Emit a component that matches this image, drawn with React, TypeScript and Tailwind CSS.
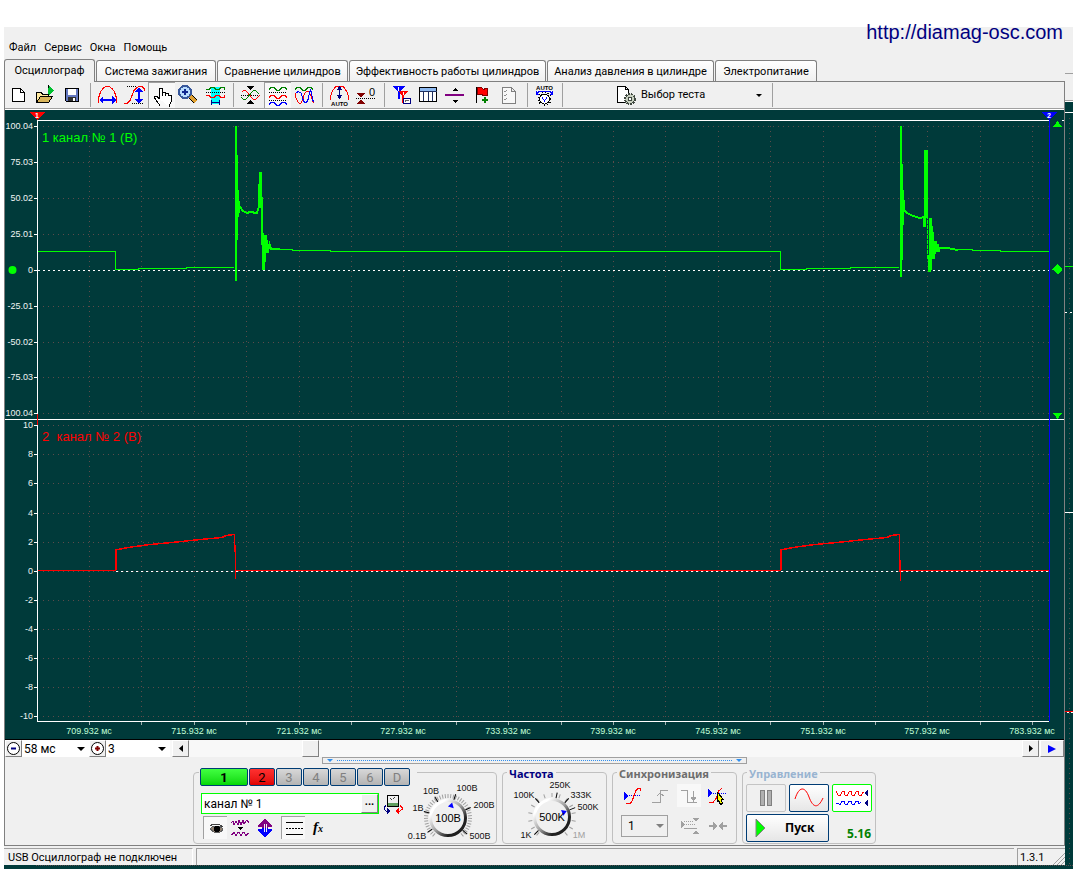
import { useState } from 'react';
import type { ReactNode } from 'react';

const tabs = [
  { label: 'Осциллограф', width: 'w-[91px]' },
  { label: 'Система зажигания', width: 'w-[120px]' },
  { label: 'Сравнение цилиндров', width: 'w-[131px]' },
  { label: 'Эффективность работы цилиндров', width: 'w-[197px]' },
  { label: 'Анализ давления в цилиндре', width: 'w-[167px]' },
  { label: 'Электропитание', width: 'w-[102px]' },
];

const raised =
  'bg-[#f0f0f0] border border-t-white border-l-white border-b-[#808080] border-r-[#808080] flex items-center justify-center';

/* ---------- Toolbar ---------- */

function ToolButton({ label, pressed, children }: { label: string; pressed?: boolean; children: ReactNode }) {
  return (
    <button
      aria-label={label}
      className={`w-[27px] h-[26px] ${pressed ? 'bg-[#f8f8f8] border-t border-l border-[#a0a0a0]' : ''}`}
    >
      <svg
        viewBox={pressed ? '1 1 26 25' : '0 0 27 26'}
        className="w-full h-full font-['Liberation_Sans',Arial,sans-serif]"
        fill="none"
        stroke="#000"
        shapeRendering="crispEdges"
      >
        {children}
      </svg>
    </button>
  );
}

function Separator() {
  return (
    <div className="w-2 h-6 flex justify-center">
      <div className="w-px bg-[#a0a0a0]" />
    </div>
  );
}

function Toolbar() {
  return (
    <div className="flex items-center h-[26px]">
      <ToolButton label="Новый">
        <path d="M7.5 6.5h8l4 4v9h-12z" fill="#fff" />
        <path d="M15.5 6.5v4h4" />
      </ToolButton>
      <ToolButton label="Открыть">
        <path d="M4.5 20.5v-10h5l1 2h6v3" fill="#ffe9a0" />
        <path d="M4.5 20.5l4-6h12l-4 6z" fill="#d8b45a" />
        <path d="M16 3v11l6-5z" fill="#00c030" stroke="none" />
        <path d="M16.5 3v3M16.5 12v2" />
      </ToolButton>
      <ToolButton label="Сохранить">
        <path d="M6.5 6.5h13v13h-12l-1-1z" fill="#6478c0" />
        <path d="M9 7h8v6H9z" fill="#fff" stroke="none" />
        <path d="M9 15h8v4H9z" fill="#303030" stroke="none" />
        <path d="M14 16h2v3h-2z" fill="#fff" stroke="none" />
      </ToolButton>
      <Separator />
      <ToolButton label="Масштаб по горизонтали">
        <path d="M4.5 21v-5l1-3 1-3 2-3 3-2.500h4l3 2.500 2 3 1 3 1 3v5" stroke="#f00" />
        <path d="M6 18h16" stroke="#00f" strokeWidth="2" />
        <path d="M5 18l4-4v8zM22 18l-4-4v8z" fill="#00f" stroke="none" />
      </ToolButton>
      <ToolButton label="Масштаб по вертикали">
        <path d="M6 4.5h10M11 21.5h12" strokeDasharray="1 1" />
        <path d="M3 21.5h3l3-3 2-5 2-5 3-3 2-1h3l2 2v2" stroke="#f00" />
        <path d="M18 7v13" stroke="#00f" strokeWidth="2" />
        <path d="M18 5l-4 5h8zM18 22l-4-5h8z" fill="#00f" stroke="none" />
      </ToolButton>
      <ToolButton label="Рука" pressed>
        <path
          d="M11.5 17V7l1-1h1l1 1v7v-4h2l1 1v3v-3h2l1 1v2v-1h2l1 1v5l-2 4v2M11.500 17l-3-3h-2v2l3 4 2 3v1"
          fill="#fff"
        />
      </ToolButton>
      <ToolButton label="Увеличить">
        <path d="M15 14l6 6" stroke="#000" strokeWidth="5" />
        <path d="M15 14l6 6" stroke="#e0a030" strokeWidth="3" />
        <circle cx="10" cy="10" r="6" fill="#b8dcff" stroke="#38589c" strokeWidth="2" />
        <path d="M7 10h6M10 7v6" stroke="#102890" strokeWidth="2" />
      </ToolButton>
      <ToolButton label="Измерения">
        <path d="M9 5h9v17H9z" fill="#0ff" stroke="none" />
        <path d="M4 7.5h3l2-2h3l2 2h3l2-2h3l1 2" stroke="#008000" />
        <path d="M4 10.5h20" strokeDasharray="1 1" />
        <path d="M4 13.500h3l2 2h3l2-2h3l2 2h3l1-2" stroke="#f00" />
        <path d="M9.5 18v5M17.5 18v5M10 20.5h7" stroke="#000080" />
      </ToolButton>
      <Separator />
      <ToolButton label="Сжать">
        <path d="M10 4h7l-3.5 4zM10 22h7l-3.5-4z" fill="#000" stroke="none" />
        <path d="M4 13.5h19" strokeDasharray="1 1" />
        <path d="M4.5 10.500l2-2h2l2 2 4 5 2 2h2l2-2 2-2" stroke="#f00" />
        <path d="M4.5 15.500l2 2h2l2-2 4-5 2-2h2l2 2 2 2" stroke="#008000" />
      </ToolButton>
      <ToolButton label="Разделить каналы" pressed>
        <path d="M5 7.500l2-2h3l3 3h2l3-3h3l2 2" stroke="#008000" />
        <path d="M5 10.5h18M5 18.5h18" strokeDasharray="1 1" />
        <path d="M5 15.500l2-2h3l3 3h2l3-3h3l2 2" stroke="#f00" />
        <path d="M5 22.500l2-2h3l3 3h2l3-3h3l2 2" stroke="#00f" />
      </ToolButton>
      <ToolButton label="Совместить каналы">
        <path d="M4 7.500l2-2h3l3 3h2l3-3h3l2 2" stroke="#008000" />
        <path d="M4.5 10.5v4l2 5 2 2h1l2-3 2-7 2-2h2l2 3 2 6 1 3" stroke="#f00" />
        <path d="M5.500 10.500l2-1 3 2 1 5 2 4h2l2-4 1-6 1-2 1 2 1 6 1 4" stroke="#00f" />
      </ToolButton>
      <Separator />
      <ToolButton label="Автомасштаб">
        <path d="M4.5 18v-4l2-5 3-4 2-1h4l2 1 3 4 2 5v4" stroke="#f00" />
        <path d="M13.5 6v10" stroke="#000080" />
        <path d="M13.5 4l-3 4h6zM13.500 17l-3-4h6z" fill="#000080" stroke="none" />
        <text x="13.5" y="24" fontSize="6" fontWeight="bold" textAnchor="middle" fill="#000" stroke="none">AUTO</text>
      </ToolButton>
      <ToolButton label="Сдвиг нуля">
        <path d="M4 11h8l-4 5zM4 22h8l-4-5z" fill="#800000" stroke="none" />
        <path d="M3 16.5h19" strokeDasharray="1 1" />
        <text x="16" y="14" fontSize="11" fill="#000" stroke="none">0</text>
      </ToolButton>
      <Separator />
      <ToolButton label="Маркеры">
        <path d="M4 4h13l-5 6v7h-2v-7z" fill="#00f" stroke="none" />
        <path d="M11 9h9l-4 5v7h-2v-7z" fill="#f00" stroke="none" />
        <path d="M10.5 5v4M15.5 10v3" stroke="#fff" />
        <path d="M15.5 16.5h7v5h-7z" fill="#fff" stroke="#000080" />
        <path d="M17 20l1-2 1 1 2-1" stroke="#666" />
      </ToolButton>
      <ToolButton label="Таблица">
        <path d="M4.5 5.5h17v14h-17z" fill="#fff" />
        <path d="M5 6h16v3H5z" fill="#8cb8f0" stroke="none" />
        <path d="M4.5 9.5h17M8.500 9v10M13.500 9v10M17.500 9v10" stroke="#203060" />
      </ToolButton>
      <ToolButton label="Разделитель">
        <path d="M3 13h19" stroke="#800080" strokeWidth="2" />
        <path d="M10 9h6l-3-3zM10 18h6l-3 3z" fill="#000" stroke="none" />
      </ToolButton>
      <ToolButton label="Добавить флаг">
        <path d="M7.5 5v16" />
        <path d="M8.5 5.5h4l2 2 2-1h2v7h-4l-2-1h-4z" fill="#f00" stroke="#800000" />
        <path d="M13 18h6M16 15v6" stroke="#008000" strokeWidth="2" />
      </ToolButton>
      <ToolButton label="Отчёт">
        <path d="M6.5 5.5h9l4 4v12h-13zM15.500 5.500v4h4" fill="#f8f8f8" stroke="#808080" />
        <path d="M8 9l1 1 2-2M8 13l1 1 2-2M8 17l1 1 2-2" stroke="#909090" />
      </ToolButton>
      <Separator />
      <ToolButton label="Автоматическая частота">
        <text x="13.5" y="8" fontSize="6" fontWeight="bold" textAnchor="middle" fill="#000" stroke="none">AUTO</text>
        <path d="M6 11.500l2-2h11l2 2M5.500 9v3h3M21.500 9v3h-3" stroke="#00f" />
        <circle cx="13.5" cy="17" r="6.5" strokeDasharray="1 2" />
        <circle cx="13.5" cy="17" r="5" fill="#fff" />
        <path d="M11.500 15v1l2 3 2-3v-1" stroke="#00f" />
      </ToolButton>
      <Separator />
      <button className="flex items-center h-[26px] w-[202px] pl-[49px] pr-1.5 text-[11px]">
        <svg viewBox="0 0 22 22" className="w-[22px] h-[22px] mr-1" fill="none" stroke="#000" shapeRendering="crispEdges">
          <path d="M2.5 2.5h8l3 3v13h-11zM10.500 2.500v3h3" fill="#fff" />
          <circle cx="15" cy="15" r="5" fill="#c8d0c0" stroke="#404840" strokeWidth="2" strokeDasharray="2 1" />
          <circle cx="15" cy="15" r="2" fill="#fff" stroke="#404840" />
        </svg>
        <span className="flex-1 text-left">Выбор теста</span>
        <svg viewBox="0 0 6 3" className="w-1.5 h-[3px]"><path d="M0 0h6L3 3z" /></svg>
      </button>
      <Separator />
    </div>
  );
}

/* ---------- Oscillogram ---------- */

const upperRows = [
  [126, '100.04'], [162, '75.03'], [198, '50.02'], [234, '25.01'], [270, '0'],
  [306, '-25.01'], [342, '-50.02'], [377, '-75.03'], [413, '100.04'],
] as const;

const lowerRows = [
  [425, '10'], [454, '8'], [483, '6'], [513, '4'], [542, '2'], [571, '0'],
  [600, '-2'], [629, '-4'], [658, '-6'], [687, '-8'], [716, '-10'],
] as const;

const rows = [...upperRows, ...lowerRows];

const times = ['709.932', '715.932', '721.932', '727.932', '733.932', '739.932', '745.932', '751.932', '757.932', '783.932'];
const columns = Array.from({ length: 19 }, (_, i) => Math.round(89 + i * 52.4));

const voltageFlat =
  'M38 251.5H115.5V269.5H138V268.5H186V267.5H234M280 249.5H292V250.5H330V251.5H780.5V269.5H806V268.5H850V267.5H899M958 249.5H972V250.5H1000V251.5H1049';

const voltageBursts = [
  'M236 281V198M235.5 200V126M236.5 155V240M237.500 190V217M238.500 201V213L240 207L243 211L247 213L250 212L257 213L259 206V190L260.500 172V208L261.500 197V245L262.500 233V263L263.500 270L264.500 262V243L265.500 235V240L266.500 252V240L267.500 253L269.500 244L271 249L280 249.500',
  'M901 277V198M900.5 200V126M901.5 164V260M902.500 190V225L903.500 200V210L907 213L913 216L920 218L923.500 217L924.500 227V190L925.500 150V205L926.500 150V218',
  'M928.500 255V270L929.500 272V238L930.500 218V270L931.500 226V235L932.500 232V255L933.500 259V252L934.500 254L935.500 241L936.500 252L937.500 244L938.500 252L940 248H947L958 250',
];

const currentFlat = 'M38 570.5H115.5V560M234.5 534V552M235.5 545V579M236 570.5H780.5V560M899.5 534V572M900.5 560V581M901 570.5H1049';
const currentRamp =
  'M116 570V550L128 547.500L150 544.500L172 542.500L200 539.500L222 537.500L226 535.500L234.500 534.500M781 570V550L793 547.500L815 544.500L837 542.500L865 539.500L887 537.500L891 535.500L899.500 534.500';

function Oscillogram() {
  return (
    <svg
      viewBox="5 110 1059 629"
      className="block w-full bg-[#003a3a] border-b border-black font-['Liberation_Sans',Arial,sans-serif]"
      fill="none"
      shapeRendering="crispEdges"
    >
      {/* dotted grid */}
      <g stroke="#5c4b4a" strokeDasharray="1 4">
        {rows.map(([y]) => (
          <path key={y} d={`M43 ${y}.5H1049`} />
        ))}
        {columns.map((x) => (
          <path key={x} d={`M${x}.5 126V416M${x}.5 426V721`} />
        ))}
      </g>
      <path d="M38 270.5H1049M116 571.5H1049" stroke="#fff" strokeDasharray="2 3" />

      {/* axes */}
      <path d="M38 120.5H1049M1062 120.5h2M5 419.5H1064M37.5 120V721M37 721.5H1049" stroke="#fff" />
      <path d="M37.5 414V425" stroke="#f00" />
      <g stroke="#fff">
        {rows.map(([y]) => (
          <path key={y} d={`M34 ${y}.5h3`} />
        ))}
      </g>
      <g stroke="#a0b0b0">
        {columns.map((x) => (
          <path key={x} d={`M${x}.5 722v3`} />
        ))}
      </g>
      <g fill="#f0f4f4" fontSize="9" textAnchor="end">
        {rows.map(([y, label]) => (
          <text key={y} x="33" y={y + 3}>{label}</text>
        ))}
      </g>
      <g fill="#c0ffd8" fontSize="9" textAnchor="middle">
        {times.map((t, i) => (
          <text key={t} x={Math.round(89 + i * 104.8)} y="734">{t} мс</text>
        ))}
      </g>

      {/* signals */}
      <path d={voltageFlat} stroke="#0f0" />
      {voltageBursts.map((d) => (
        <path key={d} d={d} stroke="#0f0" strokeWidth="2" />
      ))}
      <path d="M927.5 215V260" stroke="#0f0" strokeDasharray="4 1" />
      <path d={currentFlat} stroke="#f00" />
      <path d={currentRamp} stroke="#f00" strokeWidth="1.5" />
      <text x="42" y="142" fontSize="13" fill="#0f0">1 канал № 1 (В)</text>
      <text x="42" y="441" fontSize="13" fill="#f00" xmlSpace="preserve">2  канал № 2 (В)</text>

      {/* cursors */}
      <path d="M1049.5 118V721" stroke="#00f" />
      <path d="M30 112h15l-7.5 8z" fill="#f00" />
      <path d="M1042 112h15l-7.5 8z" fill="#00f" />
      <g fill="#fff" fontSize="7" fontWeight="bold" textAnchor="middle">
        <text x="37" y="118">1</text>
        <text x="1049" y="118">2</text>
      </g>
      <path d="M1053 127h9l-4.5-6zM1053 413h9l-4.5 6zM1057.5 264l5 5.5-5 5-5-5z" fill="#0f0" />
      <circle cx="12.5" cy="270" r="4" fill="#0f0" shapeRendering="auto" />
    </svg>
  );
}

/* ---------- Scroll row ---------- */

function DropArrow({ color = '#000' }: { color?: string }) {
  return (
    <svg viewBox="0 0 8 4" className="absolute right-1 top-1/2 -mt-0.5 w-2 h-1 pointer-events-none">
      <path d="M0 0h8L4 4z" fill={color} />
    </svg>
  );
}

function ScrollRow() {
  return (
    <div className="flex h-[17px] bg-[#f8f8f8] text-xs">
      <button aria-label="Уменьшить" className={`w-[17px] ${raised}`}>
        <svg viewBox="0 0 13 13" className="w-[13px] h-[13px] shrink-0" fill="#fff" stroke="#000">
          <circle cx="6.5" cy="6.5" r="6" />
          <path d="M4 6.5h5" stroke="#000080" strokeWidth="2" />
        </svg>
      </button>
      <div className="relative w-[67px]">
        <select aria-label="Развёртка" className="appearance-none block w-full h-full bg-white pl-0.5">
          <option>58 мс</option>
        </select>
        <DropArrow />
      </div>
      <button aria-label="Увеличить" className={`w-[17px] ${raised}`}>
        <svg viewBox="0 0 13 13" className="w-[13px] h-[13px] shrink-0" fill="#fff" stroke="#000">
          <circle cx="6.5" cy="6.5" r="6" />
          <path d="M4 6.5h5M6.5 4v5" stroke="#800000" strokeWidth="2" />
        </svg>
      </button>
      <div className="relative w-16">
        <select aria-label="Множитель" className="appearance-none block w-full h-full bg-white pl-0.5">
          <option>3</option>
        </select>
        <DropArrow />
      </div>
      <button aria-label="Назад" className={`ml-0.5 w-[17px] ${raised}`}>
        <svg viewBox="0 0 4 7" className="w-1 h-[7px]"><path d="M4 0v7L0 3.5z" /></svg>
      </button>
      <div className="flex-1 flex">
        <div className="w-[13.6%]" />
        <button aria-label="Позиция" className={`w-[17px] ${raised}`} />
      </div>
      <button aria-label="Вперёд" className={`w-[17px] ${raised}`}>
        <svg viewBox="0 0 4 7" className="w-1 h-[7px]"><path d="M0 0v7l4-3.5z" /></svg>
      </button>
      <button aria-label="В конец" className={`ml-px w-6 ${raised}`}>
        <svg viewBox="0 0 8 8" className="w-2 h-2"><path d="M0 0v8l8-4z" fill="#00f" /></svg>
      </button>
    </div>
  );
}

/* ---------- Knobs ---------- */

type KnobLabel = { text: string; x: number; y: number; dim?: boolean };

type KnobProps = {
  id: string;
  value: string;
  labels: KnobLabel[];
  marks: number[];
  angle: number;
  step: number;
};

function Knob({ id, value, labels, marks, angle, step }: KnobProps) {
  const ticks: number[] = [];
  for (let a = -140; a <= 140; a += step) ticks.push(a);
  return (
    <svg viewBox="0 0 94 68" className="w-[94px] h-[68px] font-['Liberation_Sans',Arial,sans-serif]">
      <defs>
        <linearGradient id={id} x1="0" y1="0" x2="1" y2="1">
          <stop offset="0.2" stopColor="#fff" />
          <stop offset="0.5" stopColor="#a0a0a0" />
          <stop offset="0.75" stopColor="#202020" />
        </linearGradient>
      </defs>
      {ticks.map((a) => (
        <path key={a} d="M45 23v-4" stroke="#a0a0a0" transform={`rotate(${a} 45 43)`} />
      ))}
      {marks.map((a) => (
        <path key={a} d="M45 24v-6" stroke="#000" transform={`rotate(${a} 45 43)`} />
      ))}
      <circle cx="45" cy="43" r="17.5" fill="#f0f0f0" stroke={`url(#${id})`} strokeWidth="3" />
      <path d="M42 32h6l-3-5z" fill="#00f" transform={`rotate(${angle} 45 43)`} />
      <text x="45" y="47" fontSize="11" textAnchor="middle">{value}</text>
      {labels.map((l) => (
        <text key={l.text} x={l.x} y={l.y} fontSize="9" textAnchor="middle" fill={l.dim ? '#a0a0a0' : '#101010'}>
          {l.text}
        </text>
      ))}
    </svg>
  );
}

const voltLabels: KnobLabel[] = [
  { text: '0.1В', x: 14, y: 64 },
  { text: '1В', x: 15, y: 36 },
  { text: '10В', x: 28, y: 19 },
  { text: '100В', x: 64, y: 16 },
  { text: '200В', x: 81, y: 33 },
  { text: '500В', x: 77, y: 64 },
];

const rateLabels: KnobLabel[] = [
  { text: '1K', x: 19, y: 64 },
  { text: '100K', x: 17, y: 24 },
  { text: '250K', x: 53, y: 14 },
  { text: '333K', x: 74, y: 24 },
  { text: '500K', x: 81, y: 36 },
  { text: '1M', x: 72, y: 64, dim: true },
];

/* ---------- Control panels ---------- */

const channels = ['3', '4', '5', '6', 'D'];

function IconButton({ label, pressed, children }: { label: string; pressed?: boolean; children: ReactNode }) {
  return (
    <button
      aria-label={label}
      className={`w-6 h-[23px] flex items-center justify-center ${pressed ? 'bg-[#f8f8f8] border-t border-l border-[#a0a0a0]' : ''}`}
    >
      <svg viewBox="0 0 20 20" className="w-5 h-5" fill="none" stroke="#000" shapeRendering="crispEdges">
        {children}
      </svg>
    </button>
  );
}

function ChannelPanel() {
  const [name, setName] = useState('канал № 1');
  return (
    <div className="flex w-[304px] h-[72px] border border-[#c0c0c0] rounded">
      <div className="w-[209px] pl-[5px] -mt-[5px]">
        <div className="flex gap-px w-[218px] bg-[#f0f0f0] pl-px text-[13px] text-[#808080]">
          <button className="w-12 h-[18px] leading-none border border-[#003c74] rounded-xs bg-gradient-to-b from-[#40ff40] to-[#00d800] font-bold text-black">1</button>
          <button className="w-[26px] h-[18px] leading-none border border-[#003c74] rounded-xs bg-gradient-to-b from-[#ff3030] to-[#e00000] text-black">2</button>
          {channels.map((c) => (
            <button key={c} className="w-[26px] h-[18px] leading-none border border-[#003c74] rounded-xs bg-gradient-to-b from-[#d8d8d8] to-[#b4b4b4]">
              {c}
            </button>
          ))}
        </div>
        <div className="flex items-center mt-[7px] ml-0.5">
          <div className="flex w-[178px] h-[21px] border border-[#00ff00] bg-white">
            <input
              aria-label="Название канала"
              value={name}
              onChange={(e) => setName(e.target.value)}
              className="flex-1 min-w-0 px-0.5 text-xs outline-none"
            />
            <button className={`w-[17px] text-[11px] font-bold leading-none pb-1 ${raised}`}>...</button>
          </div>
          <svg viewBox="0 0 20 20" className="w-5 h-5 ml-1" fill="none" stroke="#000" shapeRendering="crispEdges">
            <path d="M4.5 1.5h11v11h-11z" fill="#f0f0f0" />
            <path d="M7 4l2 2 2-2 2-1" stroke="#404040" strokeDasharray="1 1" />
            <path d="M5 9h10v3H5z" fill="#60a060" stroke="none" />
            <path d="M3 11.5l-2 2v2l3 2h1" stroke="#000080" />
            <path d="M4 14l4 3-4 3z" fill="#000080" stroke="none" />
            <path d="M17 11.5l2 2v2l-3 2h-1" stroke="#f00" />
            <path d="M16 14l-4 3 4 3z" fill="#f00" stroke="none" />
          </svg>
        </div>
        <div className="flex gap-px mt-0.5 ml-1">
          <IconButton label="Показать канал" pressed>
            <path d="M4 11l3-3h6l3 2 1 2-3 2H8z" fill="#908070" stroke="#606060" />
            <path d="M4 8l3-2h6l4 3" stroke="#404040" />
            <circle cx="11" cy="11" r="2.5" fill="#000" />
          </IconButton>
          <IconButton label="Фильтр">
            <path d="M1 5l2-2 1 4 2-4 2 4 1-5 2 5 2-5 1 4 2-3 1-1 2 3" stroke="#800080" />
            <path d="M7 9h6l-3 3z" fill="#000" stroke="none" />
            <path d="M1 16.5h1l2-2 2 3 2-3h1l2 3 2-3h1l2 3 2-2h1" stroke="#800080" />
          </IconButton>
          <IconButton label="Сдвиг канала">
            <path d="M10 1l7 6v2h-4v1H7V9H3V7z" fill="#800080" stroke="none" />
            <path d="M10 19l7-6v-2h-4v-1H7v1H3v2z" fill="#00f" stroke="none" />
            <path d="M9 6v8M11 6v8" stroke="#f0f0f0" />
          </IconButton>
          <div className="w-0.5" />
          <IconButton label="Линии" pressed>
            <path d="M2 4.5h17M2 16.5h17" />
            <path d="M2 10.5h17" strokeDasharray="2 1" />
          </IconButton>
          <button aria-label="Функция" className="w-6 font-['Liberation_Serif',serif] italic font-bold text-[15px] leading-none">
            f<span className="text-[10px]">x</span>
          </button>
        </div>
      </div>
      <div className="mt-0.5">
        <Knob id="rim-volt" value="100В" labels={voltLabels} marks={[-125, -75, -32, 18, 65, 130]} angle={15} step={7} />
      </div>
    </div>
  );
}

const legend = 'ml-1 pt-1 px-0.5 text-[11px] font-bold leading-[12px] font-[\'Noto_Sans\',sans-serif]';

function SyncPanel() {
  return (
    <fieldset className="w-[125px] h-[80px] border border-[#c0c0c0] rounded">
      <legend className={`${legend} text-[#6d6d6d]`}>Синхронизация</legend>
      <div className="flex gap-1 pl-2 mt-1">
        <IconButton label="Уровень">
          <path d="M1 6v8l5-4z" fill="#00f" stroke="none" />
          <path d="M4 9.5h14" stroke="#00f" strokeDasharray="1 1" />
          <path d="M3 17.5h4l2-2 2-6 2-5 2-2h2v2" stroke="#f00" />
        </IconButton>
        <IconButton label="Фронт">
          <path d="M1 16.5h8v-12h8M9.5 14V8M6 10l3-3 4 3" stroke="#a0a0a0" />
        </IconButton>
        <div className="bg-[#f8f8f8]">
          <IconButton label="Спад">
            <path d="M2 4.5h6v12h10M14.5 5v9M12 11h5l-2.5 4z" stroke="#a0a0a0" />
          </IconButton>
        </div>
        <IconButton label="Курсор">
          <path d="M1 3v8l5-4z" fill="#00f" stroke="none" />
          <path d="M4 7.5h15" stroke="#00f" strokeDasharray="1 1" />
          <path d="M2 16.5h4l3-4 3-8 3-2" stroke="#f00" />
          <path d="M10.5 6.5l6 7h-2l1 4-2 1-2-4-1 1z" fill="#ff0" />
        </IconButton>
      </div>
      <div className="flex items-center gap-1 pl-2 mt-[7px]">
        <div className="relative w-[47px] h-[22px]">
          <select aria-label="Канал синхронизации" className="appearance-none block w-full h-full border border-[#a0a0a0] bg-[#f0f0f0] pl-1.5 text-xs">
            <option>1</option>
          </select>
          <DropArrow color="#808080" />
        </div>
        <div className="w-0.5" />
        <IconButton label="Зона">
          <path d="M1 5v7l4-3.5zM12 2h7l-3 4zM12 18h7l-3-4z" fill="#a0a0a0" stroke="none" />
          <path d="M4 5.5h10M4 8.5h12" strokeDasharray="1 1" stroke="#a0a0a0" />
          <path d="M4 12.5h13" stroke="#a0a0a0" />
        </IconButton>
        <IconButton label="К центру">
          <path d="M1 9h4V6l5 4-5 4v-3H1zM19 9h-4V6l-5 4 5 4v-3h4z" fill="#a0a0a0" stroke="none" />
        </IconButton>
      </div>
    </fieldset>
  );
}

function ControlPanel() {
  return (
    <fieldset className="w-[134px] h-[80px] border border-[#c0c0c0] rounded">
      <legend className={`${legend} text-[#99b4d1]`}>Управление</legend>
      <div className="flex gap-[3px] pl-[3px] mt-1">
        <button aria-label="Пауза" className="w-10 h-7 border border-[#c4c4c4] rounded-xs flex items-center justify-center gap-0.5">
          <span className="w-[5px] h-4 bg-[#b0b0b0] border border-[#808080]" />
          <span className="w-[5px] h-4 bg-[#b0b0b0] border border-[#808080]" />
        </button>
        <button aria-label="Однократно" className="w-10 h-7 border border-[#003c74] rounded-xs bg-gradient-to-b from-white to-[#e6e6e6] flex items-center justify-center">
          <svg viewBox="0 0 30 20" className="w-[30px] h-5" fill="none" stroke="#f00">
            <path d="M1 11C5-2 11-2 15 9s9 12 14 1" />
          </svg>
        </button>
        <button aria-label="Непрерывно" className="w-10 h-7 border border-[#00ff00] rounded-xs bg-white flex items-center justify-center">
          <svg viewBox="0 0 34 20" className="w-[34px] h-5" fill="none" shapeRendering="crispEdges">
            <path d="M1 3l2 4 2 1 2-4 2-1 1 4 2 1 2-4 2-1 1 4 2 1 2-4 2-1 1 4 2 1 2-4h1" stroke="#f00" />
            <path d="M1 15h2l2 2 2-4h2l1 3 2 1 2-4h2l1 3 2 1 2-4h2l1 3 2-2" stroke="#00f" />
            <path d="M33 2v6l-4-3zM33 12v6l-4-3z" fill="#000080" />
          </svg>
        </button>
      </div>
      <div className="flex items-end justify-between pl-[3px] pr-1 mt-0.5">
        <button className="w-[83px] h-7 border border-[#003c74] rounded-xs bg-gradient-to-b from-white to-[#e6e6e6] flex items-center pl-2 text-xs font-bold font-['Noto_Sans',sans-serif]">
          <svg viewBox="0 0 11 20" className="w-[11px] h-5 mr-[19px]">
            <path d="M1 1v18l9-9z" fill="#0f0" stroke="#808080" />
          </svg>
          Пуск
        </button>
        <span className="text-xs font-bold text-[#008000] font-['Noto_Sans',sans-serif]">5.16</span>
      </div>
    </fieldset>
  );
}

/* Edge of the window lying behind the main one */
function BackWindowEdge() {
  return (
    <svg
      viewBox="1065 59 8 806"
      className="w-2 shrink-0 self-stretch bg-[#003a3a]"
      preserveAspectRatio="none"
      shapeRendering="crispEdges"
      fill="none"
    >
      <path d="M1065 59h8v42h-8z" fill="#f0f0f0" />
      <path d="M1065 73.5h8M1065 100.5h8" stroke="#a0a0a0" />
      <path d="M1065 101.5h8M1065 112.5h8M1065 512.5h8" stroke="#fff" />
      <path d="M1069.5 118V865" stroke="#5c4b4a" strokeDasharray="1 4" />
      <path d="M1065 266.5h8" stroke="#0f0" />
      <path d="M1065 312.5h8" stroke="#fff" strokeDasharray="2 3" />
      <path d="M1065 711.5h8" stroke="#f00" />
      <path d="M1067 712.5h6" stroke="#fff" strokeDasharray="2 2" />
    </svg>
  );
}

export default function App() {
  return (
    <div className="relative pt-[27px] px-1 bg-white text-black font-['Roboto','Noto_Sans',sans-serif]">
      {/* Menu */}
      <header className="bg-[#f0f0f0] h-8 pt-[13px] pl-[5px] text-[11px]">
        <nav className="flex gap-2">
          <button>Файл</button>
          <button>Сервис</button>
          <button>Окна</button>
          <button>Помощь</button>
        </nav>
      </header>
      <a
        href="http://diamag-osc.com"
        className="absolute right-3.5 top-5 text-xl leading-6 text-[#000080] font-['Liberation_Sans',Arial,sans-serif]"
      >
        http://diamag-osc.com
      </a>

      <div className="flex">
        <main className="flex-1 min-w-0 bg-[#f0f0f0]">
          <div role="tablist" className="flex items-end gap-px h-[23px] border-b border-[#808080]">
            {tabs.map((tab, i) => (
              <button
                key={tab.label}
                role="tab"
                aria-selected={i === 0}
                className={`shrink-0 border border-b-0 border-[#808080] rounded-t-[3px] text-[11px] leading-none whitespace-nowrap ${tab.width} ${
                  i === 0 ? 'h-[23px] pb-0.5 -mb-px bg-[#f0f0f0]' : 'h-[21px] bg-gradient-to-b from-white to-[#f0f0f0]'
                }`}
              >
                {tab.label}
              </button>
            ))}
          </div>

          <div className="border-x border-[#808080]">
            <Toolbar />
            <div className="h-0.5 border-t border-[#a0a0a0] bg-white" />
            <Oscillogram />
            <ScrollRow />

            {/* Bottom panels */}
            <div className="flex justify-center">
              <button aria-label="Свернуть панель" className="w-[425px] h-[7px] border border-[#a0a0a0] flex items-center justify-between px-1">
                <svg viewBox="0 0 6 3" className="w-1.5 h-[3px]"><path d="M0 0h6L3 3z" fill="#3090f0" /></svg>
                <span className="flex-1 mx-1 border-t border-dotted border-[#3090f0]" />
                <svg viewBox="0 0 6 3" className="w-1.5 h-[3px]"><path d="M0 0h6L3 3z" fill="#3090f0" /></svg>
              </button>
            </div>
            <div className="flex justify-center items-end gap-[5px] h-[81px] pb-px">
              <ChannelPanel />
              <fieldset className="w-[105px] h-[80px] border border-[#c0c0c0] rounded">
                <legend className={`${legend} text-[#000080]`}>Частота</legend>
                <div className="-mt-1.5 pl-1">
                  <Knob id="rim-rate" value="500K" labels={rateLabels} marks={[-135, -42, 12, 42, 68]} angle={68} step={20} />
                </div>
              </fieldset>
              <SyncPanel />
              <ControlPanel />
            </div>
          </div>

          {/* Status bar */}
          <footer className="flex gap-[3px] h-[20px] pt-0.5 border-t border-[#808080] text-[11px] leading-none">
            <div className="w-[189px] pl-1 border-t border-r border-t-[#a0a0a0] border-r-white flex items-center whitespace-nowrap">
              USB Осциллограф не подключен
            </div>
            <div className="flex-1 border-t border-l border-[#a0a0a0]" />
            <div className="w-12 pl-0.5 border-t border-l border-[#a0a0a0] flex items-center justify-between">
              1.3.1
              <svg viewBox="0 0 12 12" className="w-3 h-3 self-end" stroke="#a0a0a0">
                <path d="M0 12L12 0M4 12l8-8M8 12l4-4" />
              </svg>
            </div>
          </footer>
        </main>
        <BackWindowEdge />
      </div>
      <div className="h-1 bg-[#003a3a] pl-8">
        <div className="border-t border-dotted border-[#5c4b4a]" />
      </div>
    </div>
  );
}
